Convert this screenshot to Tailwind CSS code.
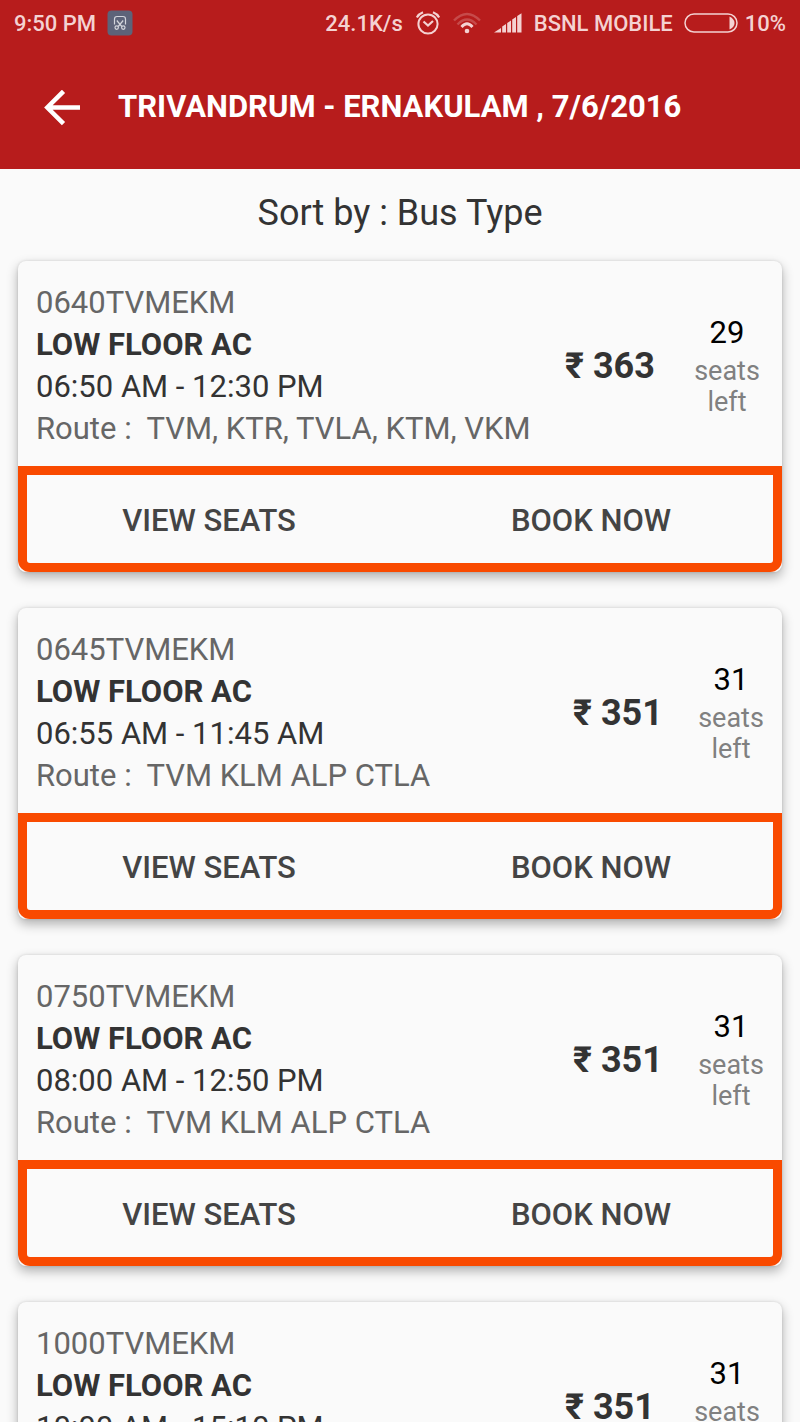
<!DOCTYPE html>
<html lang="en">
<head>
    <meta charset="UTF-8">
    <meta name="viewport" content="width=device-width, initial-scale=1.0">
    <title>Trivandrum - Ernakulam</title>
    <script src="https://cdn.jsdelivr.net/npm/@tailwindcss/browser@4"></script>
</head>
<body class="bg-[#fafafa] text-[#333333] font-['Roboto','Noto_Sans',sans-serif]">
    <header class="bg-[#b71c1c]">
        <!-- Status bar -->
        <div class="flex h-[46px] items-center justify-between px-[14px] text-[22px] font-medium text-[#f4d2d2]">
            <div class="flex items-center gap-[11px]">
                <span>9:50 PM</span>
                <svg class="h-[26px] w-[26px]" viewBox="0 0 26 26" fill="none">
                    <rect x="0.5" y="0.5" width="25" height="25" rx="4" fill="#5d6379"/>
                    <g stroke="#d3d5dc" stroke-width="1.2">
                        <path d="M7.5 14.5V9q0-2.5 2.5-2.5h6q2.5 0 2.5 2.5v5.5"/>
                        <path d="M9.8 10.5l5 6M16.200 10.500l-5 6"/>
                        <circle cx="9.7" cy="17.6" r="1.7"/>
                        <circle cx="16.3" cy="17.6" r="1.7"/>
                    </g>
                </svg>
            </div>
            <div class="flex items-center">
                <span>24.1K/s</span>
                <!-- Alarm -->
                <svg class="ml-[13px] h-6 w-6" viewBox="0 0 24 24" fill="none" stroke="#f4d2d2">
                    <circle cx="12" cy="13" r="9.6" stroke-width="2"/>
                    <path d="M7.5 10.5l4.500 4 5-4.500" stroke-width="2.2"/>
                    <path d="M.8 6.500Q2.500 3 7 1.200M23.200 6.500Q21.500 3 17 1.200" stroke-width="2.2"/>
                </svg>
                <!-- Wifi -->
                <svg class="ml-[13px] h-6 w-7" viewBox="0 0 28 24" fill="none" stroke="#f4d2d2">
                    <path d="M1 9.500Q14-3.500 27 9.500" stroke-width="2.4" opacity=".25"/>
                    <path d="M4.500 13.500Q14 3.500 23.500 13.500" stroke-width="2.4" opacity=".25"/>
                    <path d="M8.500 16Q14 9.500 19.500 16" stroke-width="2.8"/>
                    <circle cx="14" cy="20" r="2.3" fill="#f4d2d2" stroke="none"/>
                </svg>
                <!-- Signal -->
                <svg class="ml-[13px] h-6 w-7" viewBox="0 0 28 24" fill="#f4d2d2">
                    <path d="M0 21.500L7 17V21.500ZM8.200 21.500V15.500L12 13V21.500ZM13.200 21.500V12L17 9.500V21.500ZM18.200 21.500V8.500L22 6V21.500ZM23.200 21.500V5L27.500 2.200V21.500Z"/>
                </svg>
                <span class="ml-3">BSNL MOBILE</span>
                <!-- Battery -->
                <svg class="ml-[11px] h-5 w-[54px]" viewBox="0 0 54 20" fill="none">
                    <rect x="1" y="1" width="52" height="18" rx="9" stroke="#f4d2d2" stroke-width="1.5"/>
                    <path d="M45.500 3.500Q50.500 6 50.500 10T45.500 16.500Z" fill="#f4d2d2"/>
                </svg>
                <span class="ml-[7px]">10%</span>
            </div>
        </div>
        <!-- Title bar -->
        <div class="flex h-[123px] items-center pl-[44px] text-white">
            <button type="button" aria-label="Back" class="w-[74px]">
                <svg class="h-9 w-9" viewBox="0 0 36 36" fill="none" stroke="#fff" stroke-width="4.5">
                    <path d="M36 17.500H4M19.500 1.300L3.300 17.500L19.500 33.700"/>
                </svg>
            </button>
            <h1 class="text-[31px] font-bold whitespace-nowrap">TRIVANDRUM - ERNAKULAM , 7/6/2016</h1>
        </div>
    </header>

    <main class="px-[18px]">
        <div class="flex h-[92px] justify-center pb-1">
            <button type="button" class="text-[36px]">Sort by : Bus Type</button>
        </div>
        <div id="bus-list" class="flex flex-col gap-9 pb-9"></div>
    </main>

    <script>
        const buses = [
            { code: '0640TVMEKM', time: '06:50 AM - 12:30 PM', route: 'TVM, KTR, TVLA, KTM, VKM', fare: 363, seats: 29, seatsWidth: 'w-[110px]' },
            { code: '0645TVMEKM', time: '06:55 AM - 11:45 AM', route: 'TVM KLM ALP CTLA', fare: 351, seats: 31, seatsWidth: 'w-[102px]' },
            { code: '0750TVMEKM', time: '08:00 AM - 12:50 PM', route: 'TVM KLM ALP CTLA', fare: 351, seats: 31, seatsWidth: 'w-[102px]' },
            { code: '1000TVMEKM', time: '10:00 AM - 15:10 PM', route: 'TVM KLM ALP CTLA', fare: 351, seats: 31, seatsWidth: 'w-[110px]' }
        ];

        // Render one card per bus
        document.getElementById('bus-list').innerHTML = buses.map(bus => `
            <article class="rounded-lg bg-[#fafafa] shadow-[0_5px_12px_rgba(0,0,0,0.3),0_0_3px_rgba(0,0,0,0.12)]">
                <div class="flex h-[205px] items-center pt-1 pl-[18px]">
                    <div class="min-w-0 flex-1 text-[31px] leading-[42px] whitespace-nowrap">
                        <p class="text-[#666666]">${bus.code}</p>
                        <h2 class="font-bold">LOW FLOOR AC</h2>
                        <p>${bus.time}</p>
                        <p class="text-[#666666]">Route :&nbsp; ${bus.route}</p>
                    </div>
                    <p class="w-[107px] text-[36px] font-bold whitespace-nowrap">₹ ${bus.fare}</p>
                    <div class="${bus.seatsWidth} pb-1 text-center text-[27px] leading-[31px] text-[#808080]">
                        <p class="text-[31px] leading-[47px] text-black">${bus.seats}</p>
                        <p>seats<br>left</p>
                    </div>
                </div>
                <div class="grid h-[106px] grid-cols-2 rounded-b-xl pt-1 text-[31px] font-medium text-[#444444] inset-ring-[9px] inset-ring-[#f94a00]">
                    <button type="button">VIEW SEATS</button>
                    <button type="button">BOOK NOW</button>
                </div>
            </article>
        `).join('');
    </script>
</body>
</html>
